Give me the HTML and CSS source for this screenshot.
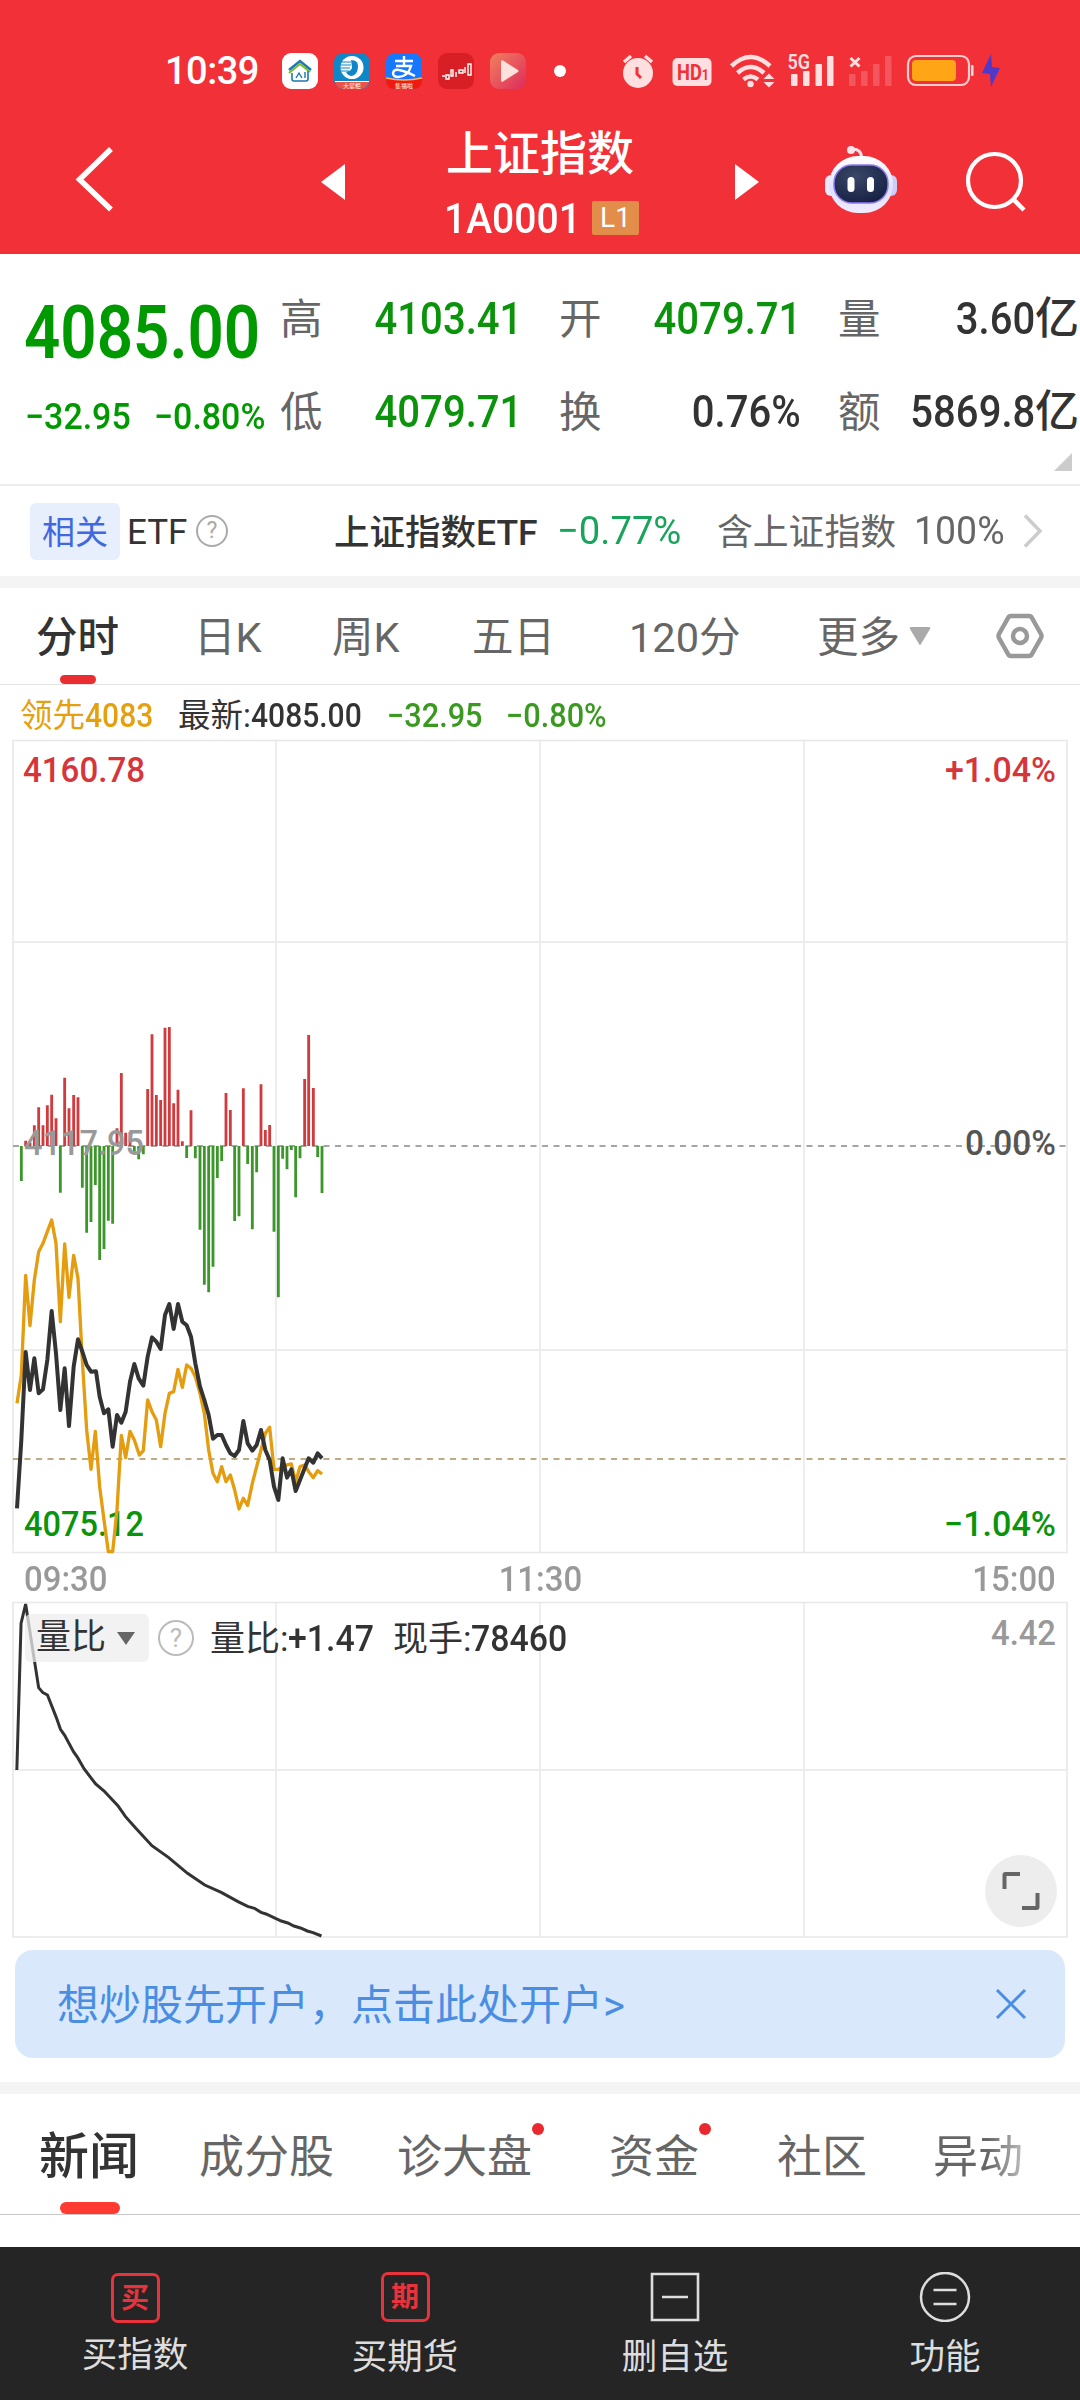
FILE: index.html
```
<!DOCTYPE html>
<html lang="zh-CN">
<head>
    <meta charset="UTF-8">
    <meta name="viewport" content="width=device-width, initial-scale=1.0">
    <title>上证指数</title>
    <link rel="stylesheet" href="styles.css">
</head>
<body>
    <header class="header">
        <!-- Status bar -->
        <div class="status-bar">
            <span class="clock">10:39</span>
            <div class="app-icons">
                <svg width="36" height="36" viewBox="0 0 36 36">
                    <rect width="36" height="36" rx="9" fill="#fff"/>
                    <path d="M7 17L18 8l11 9" fill="none" stroke="#1b78b5" stroke-width="2.500"/>
                    <path d="M7 20l11-9 10 8" fill="none" stroke="#7dbb2f" stroke-width="2"/>
                    <path d="M10 20v6q0 2 2 2h12q2 0 2-2v-8" fill="none" stroke="#1b78b5" stroke-width="1.600"/>
                    <path d="M14 25l3-5 3 5M23 19v6" fill="none" stroke="#1b78b5" stroke-width="1.400"/>
                </svg>
                <svg width="36" height="36" viewBox="0 0 36 36">
                    <rect width="36" height="36" rx="9" fill="#0f86c6"/>
                    <path d="M1 29h34q-2 7-9 7H10q-7 0-9-7z" fill="#ee5148"/>
                    <path d="M1 28.500h34" stroke="#fff"/>
                    <circle cx="18" cy="14.500" r="11.500" fill="#fff"/>
                    <path d="M17 7q7 0 7 6 0 8-6 10-4 0-6-4 6-1 6-5z" fill="#0f86c6"/>
                    <path d="M6 9h11M6 12h11M6 15h10M7 18h8" stroke="#0f86c6" stroke-width="1"/>
                    <text x="18" y="34.500" class="app-tag">大掌柜</text>
                </svg>
                <svg width="36" height="36" viewBox="0 0 36 36">
                    <rect width="36" height="36" rx="9" fill="#1677ff"/>
                    <path d="M0 25q18 4 36 0v2q0 9-9 9H9q-9 0-9-9z" fill="#f01a10"/>
                    <path d="M0 25q18 4 36 0" fill="none" stroke="#ffb45c" stroke-width="1.500"/>
                    <path d="M9 8h18M18 3v10M10 13h15q-3 11-13 11-5 0-5-4 1-4 6-3 6 1 16 6" fill="none" stroke="#fff" stroke-width="2.400"/>
                    <text x="18" y="34.500" class="app-tag">集福啦</text>
                </svg>
                <svg width="36" height="36" viewBox="0 0 36 36">
                    <rect width="36" height="36" rx="9" fill="#d71f25"/>
                    <path d="M4 23h3M8 22h3v4H8zM13 17h2v6h-2zM18 19v5M21 17h4v3h-4zM27 14v6M30 11h3v11h-3z" fill="none" stroke="#fff" stroke-width="1.400"/>
                </svg>
                <svg width="36" height="36" viewBox="0 0 36 36">
                    <defs>
                        <linearGradient id="play" x1="0" y1="0" x2="1" y2="1">
                            <stop offset="0" stop-color="#f2805e"/>
                            <stop offset="1" stop-color="#dd2b5c"/>
                        </linearGradient>
                    </defs>
                    <rect width="36" height="36" rx="9" fill="url(#play)"/>
                    <path d="M11 8.500q0-2 2-1l15 9.500q1 1 0 2l-15 9.500q-2 1-2-1z" fill="#ffe1dc"/>
                </svg>
            </div>
            <svg class="system-icons" width="460" height="40" viewBox="550 51 460 40">
                <circle cx="560" cy="71" r="6" fill="#fff"/>
                <g fill="#ffdfe0">
                    <!-- alarm -->
                    <circle cx="638" cy="73" r="15"/>
                    <path d="M624 62l7-6M652 62l-7-6" stroke="#ffdfe0" stroke-width="3.500"/>
                    <path d="M637 67v7l4 4" fill="none" stroke="#f23038" stroke-width="3"/>
                    <!-- HD -->
                    <rect x="672.500" y="58" width="39" height="28" rx="5"/>
                    <text x="677" y="80" class="hd" textLength="32" lengthAdjust="spacingAndGlyphs">HD<tspan class="hd-sub">1</tspan></text>
                    <!-- wifi -->
                    <g fill="none" stroke="#ffdfe0" stroke-width="4.500">
                        <path d="M731.500 66q19-18 38.500 0"/>
                        <path d="M737.500 73q13-12 26.500 0"/>
                        <path d="M743.500 79.500q7-6 14.500 0"/>
                    </g>
                    <circle cx="750.500" cy="84" r="3.200"/>
                    <path d="M763.500 79l5.500-5.500 5.500 5.500zM763.500 82h11l-5.500 5.500z"/>
                    <!-- signal -->
                    <text x="787.500" y="69" class="net" textLength="22.500" lengthAdjust="spacingAndGlyphs">5G</text>
                    <rect x="791" y="74" width="6.500" height="12" rx="1"/>
                    <rect x="803" y="71" width="6.500" height="15" rx="1"/>
                    <rect x="815.500" y="64" width="6.500" height="22" rx="1"/>
                    <rect x="827" y="56" width="6.500" height="30" rx="1"/>
                    <path d="M850.500 58l9 8.500M859.500 58l-9 8.500" stroke="#ffdfe0" stroke-width="3"/>
                    <g opacity=".22">
                        <rect x="849" y="74" width="6.500" height="12" rx="1"/>
                        <rect x="861" y="71" width="6.500" height="15" rx="1"/>
                        <rect x="873" y="64" width="6.500" height="22" rx="1"/>
                        <rect x="885" y="56" width="6.500" height="30" rx="1"/>
                    </g>
                    <!-- battery -->
                    <rect x="908" y="56" width="61" height="29" rx="8" fill="none" stroke="#ffcfd0" stroke-width="2.200"/>
                    <rect x="912" y="60" width="44" height="21" rx="4" fill="#ffa516"/>
                    <rect x="971" y="65" width="2.500" height="11" rx="1"/>
                    <path d="M991 54l-9 19 8 1 1 13 9-19-8-1z" fill="#5038c8"/>
                </g>
            </svg>
        </div>

        <!-- Title bar -->
        <div class="title-bar">
            <svg class="back" width="40" height="70" viewBox="75 144 40 70">
                <path d="M111 149L79.500 179.500 111 209.500" fill="none" stroke="#fff" stroke-width="5.500"/>
            </svg>
            <svg class="prev" width="24" height="36" viewBox="0 0 24 36"><path d="M24 0v36L0 18z" fill="#fff"/></svg>
            <div class="title">
                <h1>上证指数</h1>
                <div class="code-line">
                    <span class="code"><span class="num">1A0001</span></span>
                    <span class="level">L1</span>
                </div>
            </div>
            <svg class="next" width="24" height="36" viewBox="0 0 24 36"><path d="M0 0v36l24-18z" fill="#fff"/></svg>
            <svg class="robot" width="74" height="70" viewBox="0 0 74 70">
                <defs>
                    <linearGradient id="shell" x1="0" y1="0" x2="0" y2="1">
                        <stop offset="0" stop-color="#ffffff"/>
                        <stop offset=".6" stop-color="#dfe0fb"/>
                        <stop offset="1" stop-color="#f0ecff"/>
                    </linearGradient>
                    <radialGradient id="visor" cx=".4" cy=".3" r=".8">
                        <stop offset="0" stop-color="#3a4766"/>
                        <stop offset="1" stop-color="#131e42"/>
                    </radialGradient>
                </defs>
                <path d="M27 4q10-1 11 9" fill="none" stroke="#f6dfe9" stroke-width="3"/>
                <circle cx="27" cy="5" r="4" fill="#fde4ea"/>
                <rect x="1" y="30" width="12" height="21" rx="6" fill="#e9e8fd"/>
                <rect x="61" y="30" width="12" height="21" rx="6" fill="#cdcdf8"/>
                <rect x="5" y="11" width="64" height="57" rx="29" fill="url(#shell)"/>
                <rect x="10" y="20" width="54" height="38" rx="18" fill="url(#visor)" stroke="#8d7af0" stroke-width="1.500"/>
                <rect x="23.500" y="32" width="7" height="15" rx="3.500" fill="#fff"/>
                <rect x="43" y="32" width="7" height="15" rx="3.500" fill="#fff"/>
            </svg>
            <svg class="search" width="64" height="64" viewBox="964 150 64 64">
                <circle cx="994.500" cy="180.500" r="26.500" fill="none" stroke="#fff" stroke-width="4.200"/>
                <path d="M1013 199l11 11" stroke="#fff" stroke-width="4.500"/>
            </svg>
        </div>
    </header>

    <!-- Quote -->
    <section class="quote">
        <div class="quote-main">
            <div class="price"><span class="num">4085.00</span></div>
            <div class="change">
                <span class="change-item"><span class="num">−32.95</span></span>
                <span class="change-item"><span class="num">−0.80%</span></span>
            </div>
        </div>
        <dl class="quote-grid">
            <div><dt>高</dt><dd class="down"><span class="num">4103.41</span></dd></div>
            <div><dt>开</dt><dd class="down"><span class="num">4079.71</span></dd></div>
            <div><dt>量</dt><dd><span class="num">3.60</span>亿</dd></div>
            <div><dt>低</dt><dd class="down"><span class="num">4079.71</span></dd></div>
            <div><dt>换</dt><dd><span class="num">0.76%</span></dd></div>
            <div><dt>额</dt><dd><span class="num">5869.8</span>亿</dd></div>
        </dl>
        <i class="corner"></i>
    </section>

    <!-- Related ETF -->
    <section class="etf">
        <span class="etf-tag">相关</span>
        <span class="etf-label">ETF</span>
        <span class="help">?</span>
        <span class="etf-name">上证指数ETF</span>
        <span class="etf-change"><span class="num">−0.77%</span></span>
        <span class="etf-hold">含上证指数</span>
        <span class="etf-pct"><span class="num">100%</span></span>
        <svg width="20" height="36" viewBox="0 0 20 36"><path d="M2 2.500L17 18 2 33.500" fill="none" stroke="#ccc" stroke-width="3.500"/></svg>
    </section>

    <!-- Period tabs -->
    <nav class="period-tabs">
        <a class="active">分时</a>
        <a>日K</a>
        <a>周K</a>
        <a>五日</a>
        <a>120分</a>
        <a>更多</a>
        <svg width="22" height="20" viewBox="0 0 22 20"><path d="M2 1h18q2 0 1 2L12 18q-1 2-2 0L1 3Q0 1 2 1z" fill="#aaa"/></svg>
        <svg class="settings" width="48" height="48" viewBox="0 0 48 48">
            <path d="M15 4h18q2 0 3 2l9 16q1 2 0 4l-9 16q-1 2-3 2H15q-2 0-3-2L3 26q-1-2 0-4l9-16q1-2 3-2z" fill="none" stroke="#999" stroke-width="4.500"/>
            <circle cx="24" cy="24" r="7" fill="none" stroke="#999" stroke-width="4.500"/>
        </svg>
    </nav>

    <div class="chart-info">
        <span class="lead">领先<span class="num">4083</span></span>
        <span class="last">最新:<span class="num">4085.00</span></span>
        <span class="diff"><span class="num">−32.95</span></span>
        <span class="diff"><span class="num">−0.80%</span></span>
    </div>

    <!-- Intraday price chart -->
    <svg class="price-chart" width="1080" height="816" viewBox="0 739 1080 816">
        <path class="grid-line" d="M13 740.500H1067V1552.500H13zM13 942H1067M13 1350H1067M276 740V1552M540 740V1552M804 740V1552"/>
        <path d="M13 1146H1067" stroke="#888" stroke-width="1.500" stroke-dasharray="6 5.500"/>
        <g transform="translate(0 1010) scale(.33333)" fill="none" stroke-width="8.500">
            <path stroke="#cf3b3e" d="M77 408V392M90 408V398M103 408V346M116 408V292M129 408V346M142 408V286M155 408V254M168 408V325M194 408V203M207 408V295M221 408V255M234 408V262M351 408V355M364 408V189M377 408V368M390 408V366M443 408V237M456 408V73M469 408V255M482 408V270M495 408V53M508 408V51M521 408V280M534 408V239M547 408V394M573 408V301M678 408V249M691 408V300M730 408V235M783 408V223M796 408V360M809 408V345M914 408V207M926 408V75M940 408V234"/>
            <path stroke="#3d962c" d="M64 408V513M181 408V548M247 408V533M260 408V668M273 408V636M286 408V525M299 408V750M312 408V717M325 408V632M338 408V641M403 408V425M416 408V448M430 408V433M560 408V444M586 408V445M600 408V659M613 408V824M626 408V847M639 408V770M652 408V504M665 408V453M704 408V633M717 408V619M743 408V462M757 408V658M770 408V487M822 408V665M835 408V862M848 408V446M861 408V478M874 408V420M887 408V562M900 408V445M953 408V441M966 408V549"/>
        </g>
        <path d="M13 1459H1067" stroke="#a8905c" stroke-width="1.500" stroke-dasharray="6 5.500"/>
        <text class="label down" x="24" y="1536" textLength="120" lengthAdjust="spacingAndGlyphs">4075.12</text>
        <g transform="translate(0 1200) scale(.33333)" fill="none" stroke-width="10" stroke-linejoin="round">
            <polyline stroke="#e59d10" points="51,610 64,525 77,226 90,377 103,240 116,155 129,130 142,95 155,60 168,130 181,365 194,132 207,292 221,166 234,235 247,480 260,690 273,808 286,694 299,860 312,960 325,1055 338,1055 351,930 364,706 377,773 390,694 403,720 418,765 430,752 443,600 456,635 469,660 482,740 495,640 508,580 521,575 534,508 547,562 560,495 573,505 586,530 600,580 613,640 626,750 639,820 652,845 665,800 678,845 691,825 704,870 717,927 730,895 743,916 757,850 770,800 783,750 796,700 809,682 822,808 835,808 848,800 861,795 874,792 887,845 900,800 914,795 926,815 940,833 953,812 966,822"/>
            <polyline stroke="#333" stroke-width="12" points="51,925 64,720 77,456 90,570 103,475 116,580 129,568 142,480 155,333 168,460 181,630 194,505 207,678 221,500 234,418 247,455 260,495 273,515 288,514 299,590 312,640 325,628 338,740 351,645 364,668 377,635 390,545 403,492 416,535 430,557 443,470 456,412 469,425 482,447 495,345 508,312 521,387 534,312 547,365 560,376 573,410 586,490 600,560 613,600 626,645 639,716 652,705 665,705 678,735 691,760 704,768 717,750 730,663 743,730 757,752 770,735 783,690 796,750 809,780 822,860 835,900 848,775 861,833 874,808 887,873 900,840 914,805 926,775 940,788 953,760 966,775"/>
        </g>
        <text class="label up" x="23" y="782" textLength="122" lengthAdjust="spacingAndGlyphs">4160.78</text>
        <text class="label up" x="945" y="782" textLength="111" lengthAdjust="spacingAndGlyphs">+1.04%</text>
        <text class="label muted" x="24" y="1155" textLength="120" lengthAdjust="spacingAndGlyphs">4117.95</text>
        <text class="label dark" x="965" y="1155" textLength="91" lengthAdjust="spacingAndGlyphs">0.00%</text>
        <text class="label down" x="944" y="1536" textLength="112" lengthAdjust="spacingAndGlyphs">−1.04%</text>
    </svg>

    <div class="time-axis">
        <span class="num">09:30</span>
        <span class="num mid">11:30</span>
        <span class="num end">15:00</span>
    </div>

    <!-- Volume ratio chart -->
    <div class="ratio">
        <svg class="ratio-chart" width="1080" height="338" viewBox="0 1601 1080 338">
            <path class="grid-line" d="M13 1602.500H1067V1937H13zM13 1770H1067M276 1602V1937M540 1602V1937M804 1602V1937"/>
            <g transform="translate(0 1550) scale(.3827 .33333)">
                <polyline class="ratio-line" points="44,660 55,220 67,162 101,413 112,428 124,435 147,502 158,538 169,556 192,605 203,623 220,657 250,702 272,723 308,767 328,800 355,835 397,887 440,922 490,970 535,1005 578,1027 622,1055 647,1069 665,1075 682,1087 695,1092 735,1113 752,1119 768,1128 785,1134 803,1143 818,1148 840,1158"/>
            </g>
            <text class="label muted" x="991" y="1645" textLength="65" lengthAdjust="spacingAndGlyphs">4.42</text>
        </svg>
        <div class="ratio-head">
            <span class="ratio-select">量比<i></i></span>
            <span class="help">?</span>
            <span class="ratio-value">量比:<span class="num">+1.47</span></span>
            <span class="ratio-value">现手:<span class="num">78460</span></span>
        </div>
        <span class="fullscreen">
            <svg width="38" height="38" viewBox="0 0 38 38"><path d="M2.500 17V3q0-1 1-1H18M20 36h14.500q1 0 1-1V21" fill="none" stroke="#666" stroke-width="4"/></svg>
        </span>
    </div>

    <!-- Open account banner -->
    <div class="banner">
        <span>想炒股先开户，点击此处开户&gt;</span>
        <svg width="32" height="32" viewBox="0 0 32 32"><path d="M2 2l28 28M30 2L2 30" stroke="#4a8ee3" stroke-width="3"/></svg>
    </div>

    <nav class="news-tabs">
        <a class="active">新闻</a>
        <a>成分股</a>
        <a class="dot">诊大盘</a>
        <a class="dot">资金</a>
        <a>社区</a>
        <a class="fade">异动</a>
    </nav>

    <!-- Bottom toolbar -->
    <footer class="toolbar">
        <a class="first"><span class="stamp">买</span>买指数</a>
        <a><span class="stamp">期</span>买期货</a>
        <a>
            <svg width="50" height="50" viewBox="0 0 50 50"><path d="M2 2h46v46H2zM12 25h26" fill="none" stroke="#ddd" stroke-width="2.600"/></svg>
            删自选
        </a>
        <a>
            <svg width="52" height="50" viewBox="0 0 52 50"><circle cx="26" cy="25" r="24" fill="none" stroke="#ddd" stroke-width="2.500"/><path d="M14.500 18h23M14.500 32h23" stroke="#ddd" stroke-width="2.500"/></svg>
            功能
        </a>
    </footer>
</body>
</html>
```

FILE: styles.css
```
* {
    margin: 0;
    padding: 0;
    box-sizing: border-box;
}

body {
    width: 1080px;
    height: 2400px;
    overflow: hidden;
    background: #fff;
    color: #333;
    font-family: Roboto, "Noto Sans CJK SC", sans-serif;
    white-space: nowrap;
}

svg {
    display: block;
    flex: none;
}

a, span {
    flex: none;
}

/* Narrow digits */
.num {
    display: inline-block;
    font-weight: 500;
    transform: scaleX(0.91);
    transform-origin: left center;
}

.up { color: #d6363a; fill: #d6363a; }
.down { color: #0b940b; fill: #0b940b; }
.muted { fill: #999; }
.dark { fill: #555; }

/* Header */
.header {
    height: 254px;
    background: #f23038;
    color: #fff;
}

.status-bar {
    display: flex;
    align-items: center;
    height: 91px;
    padding: 51px 0 0 165px;
}

.clock {
    width: 117px;
    font-size: 38px;
    font-weight: 500;
    line-height: 40px;
    letter-spacing: -0.5px;
}

.app-icons {
    display: flex;
    gap: 16px;
}

.app-tag {
    font-size: 6px;
    fill: #fff;
    text-anchor: middle;
}

.system-icons {
    margin-left: 24px;
}

.hd { font-size: 22px; font-weight: 700; fill: #f23038; }
.hd-sub { font-size: 15px; }
.net { font-size: 21px; font-weight: 600; }

.title-bar {
    display: flex;
    height: 163px;
    padding-left: 75px;
}

.back { margin-top: 53px; }
.prev { margin: 73px 0 0 206px; }
.next { margin-top: 73px; }
.robot { margin: 54px 0 0 65px; }
.search { margin: 59px 0 0 66px; }

.title {
    width: 390px;
    padding: 29px 0 0 99px;
}

.title h1 {
    margin-left: 2px;
    font-size: 47px;
    font-weight: 500;
    line-height: 68px;
}

.code-line {
    display: flex;
    align-items: center;
    height: 60px;
}

.code {
    width: 148px;
    font-size: 42px;
}

.code .num { transform: scaleX(0.93); }

.level {
    width: 47px;
    height: 34px;
    border-radius: 2px;
    background: #e28e4a;
    font-size: 28px;
    line-height: 34px;
    text-align: center;
}

/* Quote */
.quote {
    position: relative;
    display: flex;
    height: 232px;
    border-bottom: 2px solid #ececec;
}

.quote-main {
    width: 280px;
    padding: 39px 0 0 24px;
    color: #009a00;
}

.price {
    font-size: 74px;
    line-height: 80px;
}

.price .num { font-weight: 600; transform: scaleX(0.86); }

.change {
    display: flex;
    margin: 14px 0 0 1px;
    font-size: 36.5px;
    line-height: 60px;
}

.change-item { width: 129px; }
.change-item .num { transform: scaleX(0.93); }

.quote-grid {
    display: grid;
    grid-template-columns: 242px 242px 241px;
    grid-auto-rows: 93px;
    column-gap: 37px;
    padding-top: 19px;
}

.quote-grid div {
    display: flex;
    justify-content: space-between;
    line-height: 93px;
}

.quote-grid dt {
    color: #666;
    font-size: 42.5px;
}

.quote-grid dd {
    font-size: 44px;
    font-weight: 500;
}

.quote-grid .num { transform-origin: right center; }

.corner {
    position: absolute;
    right: 8px;
    bottom: 13px;
    border-left: 18px solid transparent;
    border-bottom: 18px solid #ccc;
}

/* Related ETF */
.etf {
    display: flex;
    align-items: center;
    height: 102px;
    padding-left: 30px;
    border-bottom: 12px solid #f4f4f4;
    font-size: 35.5px;
}

.etf-tag {
    width: 90px;
    height: 57px;
    border-radius: 6px;
    background: #e7eefc;
    color: #4068e0;
    font-size: 33px;
    line-height: 60px;
    text-align: center;
}

.etf-label {
    width: 76px;
    padding: 2px 0 0 7px;
    font-size: 35px;
}

.help {
    width: 32px;
    height: 32px;
    border: 2px solid #aaa;
    border-radius: 50%;
    color: #aaa;
    font-size: 23px;
    line-height: 28px;
    text-align: center;
}

.etf-name {
    width: 223px;
    margin-left: 106px;
    padding-top: 3px;
    font-size: 35.5px;
    font-weight: 500;
    line-height: 86px;
}

.etf-change {
    width: 160px;
    color: #18a45a;
    font-size: 39px;
}

.etf-change .num { font-weight: 400; transform: scaleX(0.98); }
.etf-hold { width: 197px; padding-top: 3px; color: #666; font-size: 35.8px; line-height: 86px; }

.etf-pct {
    width: 109px;
    color: #666;
    font-size: 39px;
}

.etf-pct .num { font-weight: 400; transform: scaleX(0.96); }

/* Period tabs */
.period-tabs {
    display: flex;
    align-items: center;
    height: 97px;
    padding-left: 36px;
    border-bottom: 1px solid #e3e3e3;
    color: #666;
    font-size: 41.5px;
    line-height: 96px;
}

.period-tabs a { padding-top: 3px; }
.period-tabs a:nth-child(1) { width: 158px; }
.period-tabs a:nth-child(2) { width: 138px; }
.period-tabs a:nth-child(3) { width: 140px; }
.period-tabs a:nth-child(4) { width: 157px; }
.period-tabs a:nth-child(5) { width: 188px; }
.period-tabs a:nth-child(6) { width: 92px; }
.settings { margin-left: 65px; }

.period-tabs .active, .news-tabs .active {
    position: relative;
    color: #333;
    font-weight: 500;
}

.period-tabs .active::after {
    content: "";
    position: absolute;
    left: 24px;
    bottom: 2px;
    width: 36px;
    height: 9px;
    border-radius: 5px;
    background: #ea2d31;
}

/* Charts */
.chart-info {
    display: flex;
    height: 54px;
    padding-left: 20px;
    font-size: 32.5px;
    line-height: 61px;
}

.chart-info .num { font-size: 33px; }
.lead { width: 158px; color: #e5a010; }
.last { width: 209px; }
.diff { width: 119px; color: #3a9a20; }
.diff .num { transform: scaleX(0.93); }

.grid-line {
    fill: none;
    stroke: #e8e8e8;
    stroke-width: 1.5;
}

.label {
    font-size: 35px;
    font-weight: 500;
}

.time-axis {
    display: flex;
    justify-content: space-between;
    height: 46px;
    padding: 0 24px;
    color: #999;
    font-size: 35px;
    line-height: 49px;
}

.time-axis .num { transform: scaleX(0.94); }
.time-axis .mid { transform-origin: center; }
.time-axis .end { transform-origin: right center; }

.ratio {
    position: relative;
    height: 338px;
}

.ratio-line {
    fill: none;
    stroke: #333;
    stroke-width: 3;
    vector-effect: non-scaling-stroke;
}

.ratio-head {
    position: absolute;
    top: 13px;
    left: 25px;
    display: flex;
    align-items: center;
    height: 48px;
    font-size: 35px;
    line-height: 52px;
}

.ratio-select {
    display: flex;
    align-items: center;
    gap: 11px;
    width: 124px;
    height: 48px;
    padding-left: 11px;
    border-radius: 6px;
    background: rgba(238, 238, 238, 0.75);
}

.ratio-select i {
    border: 9px solid transparent;
    border-top: 13px solid #666;
    border-bottom: 0;
}

.ratio-head .help {
    width: 36px;
    height: 36px;
    margin: 0 16px 0 9px;
    border-color: #bbb;
    color: #bbb;
    font-size: 26px;
    line-height: 32px;
}

.ratio-value { width: 183px; padding-top: 2px; }
.ratio-value .num { font-size: 36px; transform: scaleX(0.94); }

.fullscreen {
    position: absolute;
    left: 985px;
    top: 254px;
    display: flex;
    align-items: center;
    justify-content: center;
    width: 72px;
    height: 72px;
    border-radius: 50%;
    background: #ededed;
}

/* Banner */
.banner {
    display: flex;
    align-items: center;
    justify-content: space-between;
    height: 108px;
    margin: 11px 15px 24px;
    padding: 0 38px 0 42px;
    border-radius: 18px;
    background: #dae8fb;
    color: #4a8ee3;
    font-size: 42px;
    line-height: 108px;
}

.banner span { padding-top: 4px; }

/* News tabs */
.news-tabs {
    display: flex;
    height: 133px;
    padding-left: 39px;
    border-top: 12px solid #f4f4f4;
    border-bottom: 1px solid #c8c8c8;
    color: #666;
    font-size: 45px;
    line-height: 127px;
}

.news-tabs a { position: relative; }
.news-tabs a:nth-child(1) { width: 160px; font-size: 50px; }
.news-tabs a:nth-child(2) { width: 198px; }
.news-tabs a:nth-child(3) { width: 212px; }
.news-tabs a:nth-child(4) { width: 168px; }
.news-tabs a:nth-child(5) { width: 156px; }

.news-tabs .active::after {
    content: "";
    position: absolute;
    left: 21px;
    bottom: 0;
    width: 60px;
    height: 12px;
    border-radius: 6px;
    background: #ff3a32;
}

.dot::after {
    content: "";
    position: absolute;
    left: 135px;
    top: 29px;
    width: 12px;
    height: 12px;
    border-radius: 50%;
    background: #ea2830;
}

.dot:nth-child(4)::after { left: 90px; }

.fade {
    background: linear-gradient(90deg, #666 60%, #bbb);
    background-clip: text;
    -webkit-background-clip: text;
    color: transparent;
}

/* Toolbar */
.toolbar {
    display: flex;
    height: 153px;
    margin-top: 32px;
    background: #252525;
    color: #ddd;
    font-size: 35.5px;
    line-height: 50px;
}

.toolbar a {
    display: flex;
    flex-direction: column;
    align-items: center;
    gap: 10px;
    width: 270px;
    padding-top: 25px;
}

.toolbar .first { gap: 7px; padding-top: 26px; }

.stamp {
    width: 49px;
    height: 50px;
    border: 3px solid #e8323c;
    border-radius: 7px;
    color: #e8323c;
    font-size: 28px;
    font-weight: 700;
    line-height: 45px;
    text-align: center;
}
```
